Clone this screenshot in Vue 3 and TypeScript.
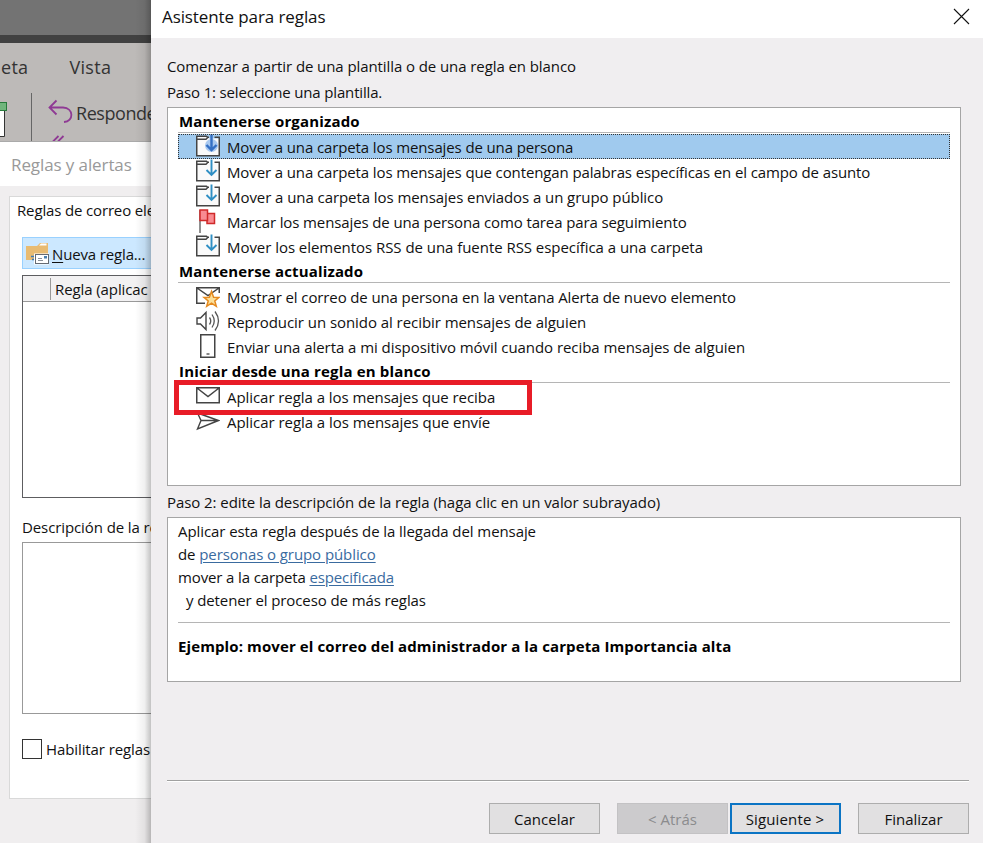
<script setup lang="ts">
type IconName = 'folder' | 'flag' | 'alert' | 'sound' | 'phone' | 'mail' | 'send'

interface Template {
  label: string
  icon: IconName
  selected?: boolean
  tracking?: number
}

interface Group {
  title: string
  items: Template[]
}

const groups: Group[] = [
  {
    title: 'Mantenerse organizado',
    items: [
      { label: 'Mover a una carpeta los mensajes de una persona', icon: 'folder', selected: true },
      { label: 'Mover a una carpeta los mensajes que contengan palabras específicas en el campo de asunto', icon: 'folder' },
      { label: 'Mover a una carpeta los mensajes enviados a un grupo público', icon: 'folder', tracking: -0.067 },
      { label: 'Marcar los mensajes de una persona como tarea para seguimiento', icon: 'flag' },
      { label: 'Mover los elementos RSS de una fuente RSS específica a una carpeta', icon: 'folder', tracking: -0.045 },
    ],
  },
  {
    title: 'Mantenerse actualizado',
    items: [
      { label: 'Mostrar el correo de una persona en la ventana Alerta de nuevo elemento', icon: 'alert' },
      { label: 'Reproducir un sonido al recibir mensajes de alguien', icon: 'sound', tracking: -0.057 },
      { label: 'Enviar una alerta a mi dispositivo móvil cuando reciba mensajes de alguien', icon: 'phone', tracking: -0.055 },
    ],
  },
  {
    title: 'Iniciar desde una regla en blanco',
    items: [
      { label: 'Aplicar regla a los mensajes que reciba', icon: 'mail', tracking: -0.06 },
      { label: 'Aplicar regla a los mensajes que envíe', icon: 'send', tracking: -0.045 },
    ],
  },
]
</script>

<template>
  <div class="desktop">
    <div class="outlook">
      <div class="caption"></div>
      <div class="strip"></div>
      <div class="tabs"><span>eta</span><span>Vista</span></div>
      <div class="ribbon">
        <svg class="calendar" width="8" height="40" viewBox="0 0 8 40">
          <path d="M-4 13.5H4.500V39.500H-4" fill="#fff" stroke="#333" />
          <rect x="-4" y="5.500" width="10.500" height="8" fill="#70b57c" stroke="#277a3b" />
        </svg>
        <div class="split"></div>
        <svg class="reply" width="26" height="54" viewBox="0 0 26 54" fill="none" stroke="#8f3a94" stroke-width="1.800">
          <path d="M8.500 8.500L1.500 15.500L8.500 22.500M1.500 15.500H15C26 16 26 29.500 16 30" />
          <path d="M10.500 44L3 51.500M15.500 44L8 51.500" />
        </svg>
        <span class="reply-label">Responde</span>
      </div>
    </div>

    <div class="rules">
      <div class="rules-title">Reglas y alertas</div>
      <div class="panel">
        <div class="tab-label">Reglas de correo ele</div>
        <div class="new-rule">
          <svg width="24" height="23" viewBox="0 0 24 23">
            <path d="M0 4H11L14 1H22V18H0Z" fill="#e8bb72" />
            <path d="M13 3.500L15 1.500H20.500V3.500Z" fill="#fff" />
            <rect x="8" y="11.500" width="15" height="11" fill="#fff" />
            <rect x="9.500" y="12.500" width="13" height="9" fill="#fff" stroke="#666b73" />
            <path d="M12 16.500H16M12 18.500H17" stroke="#8a9099" />
            <rect x="18" y="14" width="3" height="2.500" fill="#4a7fae" />
            <path d="M5 14.500H8M6 17.500H8" stroke="#3c7ab5" stroke-width="1.500" />
          </svg>
          <span><u>N</u>ueva regla...</span>
        </div>
        <div class="rule-list">
          <div class="rule-head"><i></i><span>Regla (aplicac</span></div>
        </div>
        <div class="desc-label">Descripción de la re</div>
        <div class="desc-box"></div>
        <div class="enable"><span class="check"></span><span>Habilitar reglas</span></div>
      </div>
    </div>

    <div class="shade"></div>

    <div class="wizard">
      <header class="titlebar">
        <span>Asistente para reglas</span>
        <svg width="17" height="17" viewBox="0 0 17 17" stroke="#111" stroke-width="1.100">
          <path d="M1 1L16 16M16 1L1 16" />
        </svg>
      </header>
      <div class="body">
        <p class="intro">Comenzar a partir de una plantilla o de una regla en blanco</p>
        <p class="step1">Paso 1: seleccione una plantilla.</p>

        <div class="list">
          <template v-for="group in groups" :key="group.title">
            <div class="group"><span>{{ group.title }}</span></div>
            <div v-for="item in group.items" :key="item.label" class="item" :class="{ selected: item.selected }">
              <svg class="icon" width="24" height="25" viewBox="0 0 24 25" fill="none">
                <template v-if="item.icon === 'folder'">
                  <path d="M.75 2.250H10.500L13 4.500H23.250V21.750H.75Z" fill="#fafafa" />
                  <path d="M13 3.250H11.500L10.500 2.250H.75V21.750H23.250V3.250H18.500" stroke="#444" stroke-width="1.500" />
                  <path d="M1 5.250H10L12 3.250" stroke="#444" stroke-width="1.400" />
                  <circle v-if="item.selected" cx="15.500" cy="11.500" r="6.500" fill="#a9c9f0" />
                  <path d="M15.500 .500V16M10.500 11L15.500 16L20.500 11" :stroke="item.selected ? '#3470c4' : '#2f8fc4'" :stroke-width="item.selected ? 2.4 : 1.9" />
                </template>
                <template v-else-if="item.icon === 'flag'">
                  <path d="M4 1V24" stroke="#555" stroke-width="1.300" />
                  <path d="M11 4.500H18.500V14.500H11Z" fill="#f98b92" stroke="#cf2a2a" stroke-width="1.500" />
                  <path d="M4 1H11.500V11.500H4Z" fill="#f98b92" stroke="#cf2a2a" stroke-width="1.500" />
                </template>
                <template v-else-if="item.icon === 'alert'">
                  <path d="M9 19.250H.75V3.750H23.250V9M1 4L12 11.500L23 4" stroke="#444" stroke-width="1.500" />
                  <path d="M15.500 7.500L17.600 13.200L23 13.400L18.800 16.900L20.300 22.300L15.500 19.200L10.700 22.300L12.200 16.900L8 13.400L13.400 13.200Z" fill="#fce09a" stroke="#e58a1f" stroke-width="1.500" />
                </template>
                <template v-else-if="item.icon === 'sound'">
                  <path d="M1 9H4.500L10 3.500V20.500L4.500 15H1Z" stroke="#444" stroke-width="1.400" />
                  <path d="M13.500 8.500Q16 12 13.500 15.500M16 5.500Q20.500 12 16 18.500M19 2.500Q26 12 19 21.500" stroke="#555" stroke-width="1.300" />
                </template>
                <template v-else-if="item.icon === 'phone'">
                  <rect x="4.750" y=".75" width="14" height="22.500" fill="#fff" stroke="#444" stroke-width="1.500" />
                  <path d="M10.500 20H13.500" stroke="#444" stroke-width="1.300" />
                </template>
                <template v-else-if="item.icon === 'mail'">
                  <path d="M.75 3.750H23.250V18.750H.75ZM1 4L12 12.500L23 4" stroke="#444" stroke-width="1.500" />
                </template>
                <template v-else>
                  <path d="M1.500 4L22.500 11.500L1.500 20L5 11.500ZM5 11.500H22" stroke="#444" stroke-width="1.400" />
                </template>
              </svg>
              <span :style="{ letterSpacing: (item.tracking ?? -0.117) + 'px' }">{{ item.label }}</span>
            </div>
          </template>
          <div class="highlight"></div>
        </div>

        <p class="step2">Paso 2: edite la descripción de la regla (haga clic en un valor subrayado)</p>
        <div class="description">
          <p>Aplicar esta regla después de la llegada del mensaje</p>
          <p>de <a>personas o grupo público</a></p>
          <p class="folder-line">mover a la carpeta <a>especificada</a></p>
          <p class="indent">y detener el proceso de más reglas</p>
          <hr />
          <p class="example">Ejemplo: mover el correo del administrador a la carpeta Importancia alta</p>
        </div>

        <footer class="footer">
          <button class="cancel">Cancelar</button>
          <button class="back" disabled>&lt; Atrás</button>
          <button class="next">Siguiente &gt;</button>
          <button class="finish">Finalizar</button>
        </footer>
      </div>
    </div>
  </div>
</template>

<style>
body {
  overflow: hidden;
}
</style>

<style scoped>
.desktop,
.desktop * {
  box-sizing: border-box;
}
.desktop {
  position: relative;
  width: 983px;
  height: 843px;
  overflow: hidden;
  background: #f0eef0;
  color: #111;
  font: 15px/25px "Open Sans", "Noto Sans", sans-serif;
  letter-spacing: -0.1px;
  white-space: nowrap;
}
p {
  margin: 0;
}

/* Main window behind */
.outlook {
  position: absolute;
  left: 0;
  top: 0;
  width: 151px;
  height: 142px;
  overflow: hidden;
  background: #bdbab8;
  color: #333;
  font-size: 18px;
}
.caption {
  height: 35px;
  background: #737373;
}
.strip {
  height: 8px;
  background: #414141;
}
.tabs {
  display: flex;
  gap: 41px;
  height: 49px;
  padding-left: 1px;
  line-height: 48px;
  letter-spacing: 0.3px;
}
.ribbon {
  display: flex;
  height: 50px;
}
.calendar {
  flex: none;
  margin-top: 5px;
}
.split {
  flex: none;
  width: 1px;
  height: 50px;
  margin: 1px 16px 0 23px;
  background: #666;
}
.reply {
  flex: none;
}
.reply-label {
  margin-left: 2px;
  line-height: 42px;
  letter-spacing: -0.45px;
}

/* Rules and alerts window */
.rules {
  position: absolute;
  left: 0;
  top: 141px;
  width: 151px;
  height: 702px;
  overflow: hidden;
  border-top: 1px solid #aaa;
  background: #f0eeef;
}
.rules-title {
  height: 44px;
  padding-left: 11px;
  background: #fff;
  color: #999;
  font-size: 17px;
  line-height: 46px;
}
.panel {
  width: 300px;
  height: 603px;
  margin: 10px 0 0 9px;
  padding: 0 12px;
  border: 1px solid #d9d9d9;
  background: #fff;
}
.tab-label {
  height: 40px;
  margin-left: -5px;
  line-height: 26px;
  letter-spacing: -0.15px;
}
.new-rule {
  display: flex;
  align-items: center;
  gap: 2px;
  height: 32px;
  padding: 0 3px;
  border: 1px solid #99d1ff;
  background: #cce8ff;
}
.new-rule span {
  padding-top: 2px;
  letter-spacing: -0.15px;
}
.new-rule u {
  text-underline-offset: 2px;
}
.rule-list {
  height: 223px;
  margin-top: 6px;
  border: 1px solid #5d5d60;
}
.rule-head {
  display: flex;
  height: 26px;
  border-bottom: 1px solid #999;
  background: #f2f1f2;
  line-height: 26px;
}
.rule-head i {
  flex: none;
  width: 28px;
  height: 22px;
  margin: 2px 4px 0 0;
  border-right: 1px solid #999;
}
.desc-label {
  height: 44px;
  padding-top: 17px;
}
.desc-box {
  height: 172px;
  border: 1px solid #999;
}
.enable {
  display: flex;
  align-items: center;
  gap: 4px;
  margin-top: 23px;
}
.check {
  width: 20px;
  height: 20px;
  margin-bottom: 2px;
  border: 1px solid #333;
}
.shade {
  position: absolute;
  left: 135px;
  top: 0;
  width: 16px;
  height: 843px;
  background: linear-gradient(to right, rgba(0, 0, 0, 0), rgba(0, 0, 0, 0.06) 60%, rgba(0, 0, 0, 0.24));
}

/* Wizard window */
.wizard {
  position: absolute;
  left: 151px;
  top: 0;
  width: 832px;
  height: 843px;
  background: #f0eef0;
}
.titlebar {
  display: flex;
  align-items: center;
  justify-content: space-between;
  height: 38px;
  padding: 0 13px 6px 11px;
  background: #fff;
  font-size: 17px;
}
.body {
  padding: 16px 14px 0 16px;
}
.intro {
  height: 26px;
  letter-spacing: -0.085px;
}
.step1 {
  height: 27px;
  letter-spacing: -0.16px;
}
.list {
  position: relative;
  width: 794px;
  height: 379px;
  padding: 1px 10px;
  border: 1px solid #a5a5a5;
  background: #fff;
}
.group {
  height: 25px;
  color: #000;
  font-weight: 700;
  letter-spacing: 0.16px;
  padding-left: 1px;
  background: linear-gradient(#b5b5b5, #b5b5b5) 0 23px / 100% 1px no-repeat;
}
.item {
  display: flex;
  gap: 7px;
  height: 25px;
  padding-left: 18px;
  line-height: 26px;
}
.icon {
  flex: none;
}
.selected {
  background: #a0caee;
  outline: 1px dotted #333;
  outline-offset: -1px;
}
.highlight {
  position: absolute;
  left: 6px;
  top: 272px;
  width: 358px;
  height: 35px;
  border: 5px solid #e81c27;
}
.step2 {
  height: 31px;
  padding-top: 4px;
  letter-spacing: -0.07px;
}
.description {
  width: 794px;
  height: 165px;
  padding: 2px 10px;
  border: 1px solid #a5a5a5;
  background: #fff;
  line-height: 23px;
  letter-spacing: -0.08px;
}
.description a {
  color: #3a6b9f;
  text-decoration: underline;
  text-underline-offset: 2px;
}
.folder-line {
  letter-spacing: -0.13px;
}
.indent {
  padding-left: 8px;
  letter-spacing: -0.1px;
}
hr {
  height: 1px;
  margin: 10px 0 12px;
  border: 0;
  background: #b5b5b5;
}
.example {
  color: #000;
  font-weight: 700;
  letter-spacing: 0.105px;
}
.footer {
  display: flex;
  justify-content: flex-end;
  margin-top: 98px;
  padding-top: 22px;
  border-top: 1px solid #a0a0a0;
  box-shadow: inset 0 1px #fff;
}
button {
  width: 111px;
  height: 31px;
  padding: 2px 0 0;
  border: 1px solid #adadad;
  background: #e1e0e1;
  color: #111;
  font: inherit;
  line-height: 27px;
  letter-spacing: 0;
}
.back {
  margin: 0 2px 0 17px;
  border-color: #c3c2c4;
  background: #cccbcd;
  color: #8b8b8d;
}
.next {
  padding-top: 1px;
  padding-right: 1px;
  border: 2px solid #0b74c4;
  letter-spacing: 0.15px;
}
.finish {
  margin-left: 17px;
}
</style>
